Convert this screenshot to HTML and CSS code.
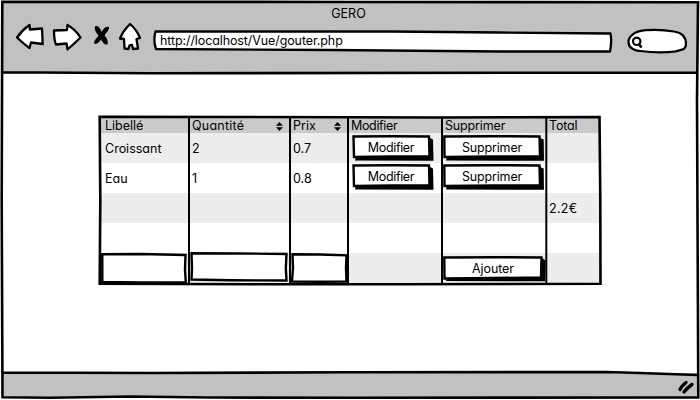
FILE: index.html
```html
<!DOCTYPE html>
<html lang="fr">
<head>
<meta charset="utf-8">
<title>GERO</title>
<link rel="stylesheet" href="styles.css">
</head>
<body>
<div class="window">
  <header class="chrome">
    <h1 class="title">GERO</h1>
    <div class="toolbar">
      <svg class="nav" width="130" height="36" viewBox="14 18 130 36">
        <g fill="#fff" stroke="#000" stroke-width="2.300" stroke-linejoin="round">
          <path d="M17 37.500 Q22 30 29.500 25 L30 29.500 L42 28.500 L42.700 44 L31 42.500 L29.500 48 Q25 45 17 37.500Z"/>
          <path d="M54 30.500 L67 30 L67.500 25 Q75 29 80.500 37.500 Q75 43 67.500 49.500 L66.500 43.500 L56 44.500 Q54 40 54 30.500Z"/>
          <path d="M130 24 Q137 30 140 38 L136.500 39 L138 48.500 L133 49 L132 45 L129.500 45.500 L128.500 49 L124.500 48.500 L124 39 L120 38.500 Q123 31 130 24Z"/>
        </g>
        <path d="M95 26.500 C98 25 100 28 101.700 32 C103 29 106 25.500 109 27 C109.500 30 106 33 104.500 35.500 C107 38 108.500 41.500 107.500 44.500 C104 45 102.500 42 101 39.500 C99 42.500 96.500 45 94 43.500 C94 40 97 38 98.500 35.500 C95.500 32 94 29 95 26.500Z"/>
      </svg>
      <div class="address">
        <svg class="sketch" width="462" height="26" viewBox="152 28 462 26"><path d="M155.500 31.500 H390 L500 32.500 L610.500 33.500 Q612 41 610 51.500 H500 L330 50 L156 49 Q153 41 155.500 31.500Z" fill="#fff" stroke="#000" stroke-width="2.300" stroke-linejoin="round"/></svg>
        <span class="url">http://localhost/Vue/gouter.php</span>
      </div>
      <svg class="search" width="62" height="28" viewBox="626 27 62 28">
        <path d="M640 51 C631 50 628.500 46 628.500 42 C628.500 36 635 31 646 30.200 Q660 29 674 31.500 C684 33 686 39 686 44 C686 50 682 49.500 676 51.300 Q660 53.500 640 51Z" fill="#fff" stroke="#000" stroke-width="2.200"/>
        <circle cx="636.700" cy="41.300" r="3.700" fill="none" stroke="#000" stroke-width="2.200"/>
        <path d="M638.500 43.500 L641.500 47.500" stroke="#000" stroke-width="2.600"/>
      </svg>
    </div>
  </header>

  <main class="content">
    <div class="table">
      <div class="row head">
        <span class="cell">Libellé</span>
        <span class="cell quantite">Quantité<svg class="sort" width="7" height="9" viewBox="0 0 7 9"><path d="M0 3.800 L3.500 0 L7 3.800Z M0 5.200 H7 L3.500 9Z"/></svg></span>
        <span class="cell prix">Prix<svg class="sort" width="7" height="9" viewBox="0 0 7 9"><path d="M0 3.800 L3.500 0 L7 3.800Z M0 5.200 H7 L3.500 9Z"/></svg></span>
        <span class="cell modifier">Modifier</span>
        <span class="cell supprimer">Supprimer</span>
        <span class="cell total">Total</span>
      </div>
      <div class="row shade">
        <span class="cell">Croissant</span><span class="cell">2</span><span class="cell">0.7</span>
        <span class="slot slot-first"><button class="btn btn-mod"><svg class="sketch" width="82" height="27"><path d="M4 21 L3 25.500 L81.500 25.800 L81 4.500 L78 3V21Z"/><path class="face" d="M1.500 1.500 L40 1.200 L77 1.500 L77.500 21.500 L40 21.500 L2 22Z"/></svg><span class="modifier">Modifier</span></button></span>
        <span class="slot slot-first slot-sup"><button class="btn btn-sup"><svg class="sketch" width="102" height="27"><path d="M4 21 L3 25.500 L101 25.800 L100.700 4.500 L97 3V21Z"/><path class="face" d="M1.300 1.500 L50 1.200 L96.500 1.500 L97 21.300 L50 21.500 L1.500 22Z"/></svg><span class="supprimer">Supprimer</span></button></span>
        <span class="cell"></span>
      </div>
      <div class="row">
        <span class="cell">Eau</span><span class="cell">1</span><span class="cell">0.8</span>
        <span class="slot slot-second"><button class="btn btn-mod"><svg class="sketch" width="82" height="27"><path d="M4 21 L3 25.500 L81.500 25.800 L81 4.500 L78 3V21Z"/><path class="face" d="M1.500 1.500 L40 1.200 L77 1.500 L77.500 21.500 L40 21.500 L2 22Z"/></svg><span class="modifier">Modifier</span></button></span>
        <span class="slot slot-second slot-sup"><button class="btn btn-sup"><svg class="sketch" width="102" height="27"><path d="M4 21 L3 25.500 L101 25.800 L100.700 4.500 L97 3V21Z"/><path class="face" d="M1.300 1.500 L50 1.200 L96.500 1.500 L97 21.300 L50 21.500 L1.500 22Z"/></svg><span class="supprimer">Supprimer</span></button></span>
        <span class="cell"></span>
      </div>
      <div class="row shade">
        <span class="cell"></span><span class="cell"></span><span class="cell"></span><span class="cell"></span><span class="cell"></span><span class="cell sum">2.2€</span>
      </div>
      <div class="row"></div>
      <div class="row shade">
        <span class="slot"></span><span class="slot"></span><span class="slot"></span><span class="slot"></span>
        <span class="slot slot-add slot-sup"><button class="btn btn-add"><svg class="sketch" width="104" height="27"><path d="M4 21 L3 25 L102 25.200 L102.700 4.500 L99 2V21Z"/><path class="face" d="M1.300 1.500 L50 1.200 L98.500 1.500 L98 21.500 L50 22 L1.500 22.500Z"/></svg><span class="ajouter">Ajouter</span></button></span>
        <span class="slot"></span>
      </div>
      <svg class="lines" width="506" height="174" viewBox="97 113 506 174">
        <g class="stroke">
          <path class="edge" d="M99.700 116.700 L250 117 L440 117.500 L599.500 117 L600.300 200 L600.500 283.800 L400 284.300 L250 284.300 L99.700 283.700 L100.300 200Z"/>
          <path d="M189 117V284M290 117V284M348 117V284M442 117V284M546.300 117V284"/>
          <path class="face" d="M102.300 254.200 L140 254 L185.500 255 L185 270 L185.800 282.500 L140 282.500 L102.300 282 L102.300 268Z"/>
          <path class="face" d="M191.500 253.300 L240 253.500 L286.500 254 L285.800 268 L286.500 280.500 L230 280.300 L191.500 279.500 L192 268Z"/>
          <path class="face" d="M292.500 254.200 L320 254.500 L346.500 255.300 L346 268 L346.500 281.500 L320 281.800 L292 281.500 L293 268Z"/>
        </g>
      </svg>
    </div>
  </main>

  <footer class="status">
    <svg width="18" height="16" viewBox="677 380 18 16"><path d="M680 389.500 Q682 385.500 686 382.500M684 392 Q687 388 692 384.500" fill="none" stroke="#000" stroke-width="3.400" stroke-linecap="round"/></svg>
  </footer>

  <svg class="frame" width="700" height="400" viewBox="0 0 700 400">
    <path d="M0 0H700V400H0Z M3 3V397.500H698V3Z" fill="#fff" fill-rule="evenodd"/>
    <path d="M2.300 1.700 L350 2 L698 2.200 L697 100 L698.300 397.500 L350 397.800 L210 397.500 L130 396.500 L50 397.800 L2.500 397.300 L1.700 200Z M2 72.300 L150 73.300 L698 72.500 M2 372.500 L150 373 L350 372.200 L607 372 L640 373 L697 375" fill="none" stroke="#000" stroke-width="2.600"/>
  </svg>
</div>
</body>
</html>
```
FILE: styles.css
```css
* { box-sizing: border-box; }
body {
  margin: 0;
  font-family: Inter, "Liberation Sans", sans-serif;
  font-size: 12.5px;
  line-height: 16px;
  font-feature-settings: "cv11" 1;
  color: #000;
  background: #fff;
}
.window {
  position: relative;
  display: flex;
  flex-direction: column;
  width: 700px;
  height: 400px;
  overflow: hidden;
}
.chrome { height: 73px; background: #c1c1c1; padding-top: 6px; }
.title {
  height: 15px;
  margin: 0;
  padding-right: 3px;
  font-size: 12.5px;
  font-weight: 400;
  text-align: center;
}
.toolbar { display: flex; align-items: flex-start; padding: 0 12px 0 14px; }
.nav { margin: -3px 8px 0 0; flex: none; }
.address { position: relative; width: 462px; height: 26px; margin-top: 7px; padding: 5px 0 0 8px; }
.sketch { position: absolute; left: 0; top: 0; }
.url { position: relative; display: block; letter-spacing: -0.1px; }
.search { margin: 6px 0 0 12px; flex: none; }

.content { flex: 1; padding: 45px 0 0 100px; }
.table { position: relative; width: 500px; }
.row {
  display: grid;
  grid-template-columns: 89px 101px 58px 94px 104px 54px;
  height: 30px;
}
.shade { background: #ededed; }
.head { height: 15px; background: #cacaca; }
.cell { display: flex; align-items: center; padding: 2px 0 0 3px; white-space: nowrap; }
.cell:first-child { padding-left: 5px; }
.head .cell { height: 14px; }
.quantite { letter-spacing: 0.25px; }
.modifier { letter-spacing: -0.35px; }
.supprimer { letter-spacing: -0.15px; }
.total { letter-spacing: -0.2px; }
.sum { letter-spacing: 0.3px; }
.ajouter { letter-spacing: -0.1px; }
.sort { margin: 0 7px 0 auto; }
.prix .sort { margin-right: 7px; }
.slot { display: flex; align-items: flex-start; padding-left: 4px; }
.slot-sup { padding-left: 1px; }
.slot-first { padding-top: 2px; }
.slot-second { padding-top: 1px; }
.slot-add { padding-top: 3px; }
.btn {
  position: relative;
  z-index: 1;
  flex: none;
  height: 27px;
  margin: 0;
  padding: 0 4px 1px 0;
  border: 0;
  background: none;
  color: inherit;
  font: inherit;
  font-feature-settings: inherit;
}
.btn span { position: relative; }
.btn-mod { width: 82px; }
.btn-sup { width: 102px; }
.btn-add { width: 104px; }
.face { fill: #fff; stroke: #000; stroke-width: 2.4; }
.stroke { fill: none; stroke: #000; stroke-width: 2; }
.edge { stroke-width: 2.6; }
.lines { position: absolute; left: -3px; top: -5px; }

.status {
  display: flex;
  justify-content: flex-end;
  height: 27px;
  padding: 7px 5px 0 0;
  background: #c1c1c1;
}
.frame { position: absolute; left: 0; top: 0; pointer-events: none; }
```
